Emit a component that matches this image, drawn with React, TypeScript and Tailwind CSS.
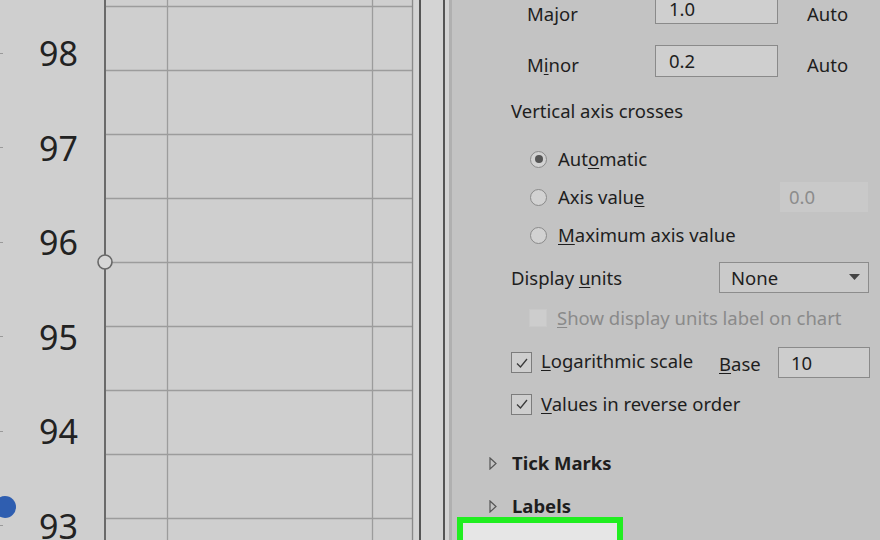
import React from "react";

const labels = ["98", "97", "96", "95", "94", "93"];

function ChartGrid() {
  const rows = [6, 70, 134, 198, 262, 326, 390, 454, 518];
  return (
    <svg width="309" height="540" viewBox="0 0 309 540" className="block shrink-0 overflow-visible">
      {rows.map((y) => (
        <line key={y} x1="0" x2="309" y1={y + 0.5} y2={y + 0.5} stroke="#9c9c9c" strokeWidth="1.3" />
      ))}
      <line x1="63.5" x2="63.5" y1="0" y2="540" stroke="#9c9c9c" strokeWidth="1.3" />
      <line x1="268.5" x2="268.5" y1="0" y2="540" stroke="#9c9c9c" strokeWidth="1.3" />
      <line x1="308.5" x2="308.5" y1="0" y2="540" stroke="#8a8a8a" strokeWidth="1.3" />
      <line x1="1" x2="1" y1="0" y2="540" stroke="#6a6a6a" strokeWidth="2" />
      <circle cx="1" cy="262" r="7" fill="#d6d6d6" stroke="#686868" strokeWidth="1.6" />
    </svg>
  );
}

function Radio({ checked }: { checked?: boolean }) {
  return (
    <span className="flex h-[17px] w-[17px] shrink-0 items-center justify-center rounded-full border border-[#8a8a8a] bg-[#d2d2d2]">
      {checked && <span className="h-[8px] w-[8px] rounded-full bg-[#555]" />}
    </span>
  );
}

function Check({ checked, disabled }: { checked?: boolean; disabled?: boolean }) {
  return (
    <span
      className={
        disabled
          ? "flex h-[18px] w-[18px] shrink-0 border border-[#c8c8c8] bg-[#cdcdcd]"
          : "flex h-[21px] w-[21px] shrink-0 items-center justify-center border border-[#7c7c7c] bg-[#cecece]"
      }
    >
      {checked && (
        <svg width="14" height="14" viewBox="0 0 14 14">
          <path d="M2 7.5 L5.5 11 L12 3" fill="none" stroke="#3a3a3a" strokeWidth="1.3" />
        </svg>
      )}
    </span>
  );
}

function Caret() {
  return (
    <svg width="8" height="13" viewBox="0 0 8 13" className="shrink-0">
      <path d="M1 1 L7 6.5 L1 12 Z" fill="none" stroke="#555" strokeWidth="1.2" />
    </svg>
  );
}

export default function App() {
  return (
    <div
      className="flex h-[540px] w-[880px] overflow-hidden bg-[#c3c3c3] text-[#1e1e1e]"
      style={{ fontFamily: '"Noto Sans", "Open Sans", sans-serif' }}
    >
      {/* chart */}
      <div className="relative flex w-[414px] shrink-0 bg-[#cfcfcf]">
        <div className="flex w-[104px] shrink-0 flex-col pt-[6px]">
          {labels.map((l) => (
            <div key={l} className="flex h-[94.5px] shrink-0 items-center justify-between pr-[26px]">
              <span className="h-px w-[3px] bg-[#9a9a9a]" />
              <span className="text-[34px] leading-none text-[#222]">{l}</span>
            </div>
          ))}
        </div>
        <ChartGrid />
        <span className="absolute left-[-6px] top-[496px] h-[22px] w-[22px] rounded-full bg-[#2f5eb0]" />
      </div>

      {/* splitter */}
      <div className="flex w-[38px] shrink-0 bg-[#d4d4d4]">
        <div className="ml-[5px] w-[2px] bg-[#555]" />
        <div className="ml-[22px] w-[2px] bg-[#555]" />
        <div className="ml-[4px] w-[3px] bg-[#b0b0b0]" />
      </div>

      {/* format panel */}
      <div className="flex flex-1 flex-col pl-[59px] text-[18.5px] [&>*]:shrink-0">
        <div className="-mt-[8px] flex h-[32px] items-center pl-[16px]">
          <span className="w-[128px] pt-[11px]">Ma<u className="underline-offset-2">j</u>or</span>
          <span className="flex h-full w-[123px] items-center border border-[#8a8a8a] bg-[#cfcfcf] px-[13px] pt-[2px]">1.0</span>
          <span className="ml-[29px] pt-[11px]">Auto</span>
        </div>
        <div className="mt-[21px] flex h-[32px] items-center pl-[16px]">
          <span className="w-[128px] pt-[7px]">M<u className="underline-offset-2">i</u>nor</span>
          <span className="flex h-full w-[123px] items-center border border-[#8a8a8a] bg-[#cfcfcf] px-[13px]">0.2</span>
          <span className="ml-[29px] pt-[7px]">Auto</span>
        </div>
        <div className="mt-[22px] flex h-[24px] items-center">Vertical axis crosses</div>
        <div className="mt-[24px] flex h-[24px] items-center gap-[11px] pl-[19px]">
          <Radio checked />
          <span>Aut<u className="underline-offset-2">o</u>matic</span>
        </div>
        <div className="mt-[11px] flex h-[30px] w-[357px] items-center pl-[19px]">
          <Radio />
          <span className="ml-[11px]">Axis valu<u className="underline-offset-2">e</u></span>
          <span className="ml-auto flex h-full w-[88px] items-center bg-[#c9c9c9] px-[9px] text-[#8c8c8c]">0.0</span>
        </div>
        <div className="mt-[11px] flex h-[24px] items-center gap-[11px] pl-[19px]">
          <Radio />
          <span><u className="underline-offset-2">M</u>aximum axis value</span>
        </div>
        <div className="mt-[15px] flex h-[31px] items-center">
          <span className="w-[208px]">Display <u className="underline-offset-2">u</u>nits</span>
          <span className="flex h-full w-[150px] items-center justify-between border border-[#8c8c8c] bg-[#cacaca] pl-[11px] pr-[8px]">
            <span>None</span>
            <svg width="11" height="7" viewBox="0 0 11 7">
              <path d="M0 0 H11 L5.5 6 Z" fill="#444" />
            </svg>
          </span>
        </div>
        <div className="mt-[13px] flex h-[24px] items-center gap-[10px] pl-[18px] text-[#8a8a8a]">
          <Check disabled />
          <span><u className="underline-offset-2">S</u>how display units label on chart</span>
        </div>
        <div className="mt-[17px] flex h-[31px] items-center">
          <Check checked />
          <span className="ml-[9px] w-[178px] pb-[3px]"><u className="underline-offset-2">L</u>ogarithmic scale</span>
          <span className="w-[59px] pt-[3px]"><u className="underline-offset-2">B</u>ase</span>
          <span className="flex h-full w-[92px] items-center border border-[#8a8a8a] bg-[#cdcdcd] px-[12px]">10</span>
        </div>
        <div className="mt-[14px] flex h-[24px] items-center gap-[9px]">
          <Check checked />
          <span><u className="underline-offset-2">V</u>alues in reverse order</span>
        </div>
        <div className="-ml-[22px] mt-[35px] flex h-[24px] items-center gap-[15px] font-bold">
          <Caret />
          <span>Tick Marks</span>
        </div>
        <div className="-ml-[22px] mt-[19px] flex h-[24px] items-center gap-[15px] font-bold">
          <Caret />
          <span>Labels</span>
        </div>
        <div className="-ml-[54px] mt-[-1px] h-[40px] w-[166px] border-[6px] border-[#20ee20] bg-[#e6e6e6]" />
      </div>
    </div>
  );
}
